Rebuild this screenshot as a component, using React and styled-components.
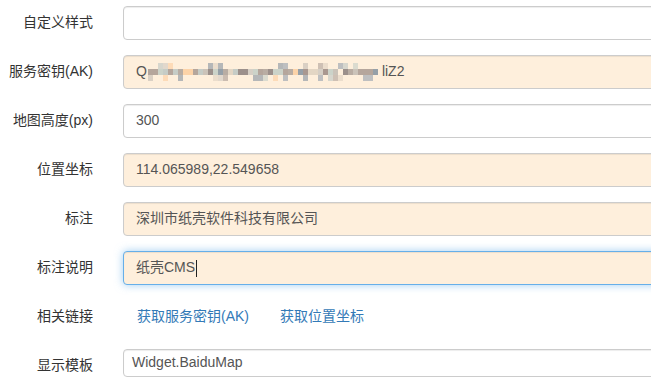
import React from 'react';
import styled, {createGlobalStyle, css} from 'styled-components';

const Global = createGlobalStyle`
  html, body {
    margin: 0;
    background: #fff;
  }
  body {
    font-family: "Liberation Sans", Arial, "Noto Sans CJK SC", sans-serif;
    font-size: 14px;
    line-height: 1.42857;
    color: #333;
    overflow: hidden;
  }
  #root {
    width: 651px;
    height: 387px;
    overflow: hidden;
  }
`;

const Form = styled.form`
  width: 780px;
  padding-top: 6px;
  display: flex;
  flex-direction: column;
  gap: 15px;
`;

const Group = styled.div`
  display: grid;
  grid-template-columns: 108px 1fr;
  align-items: start;
`;

const Label = styled.label`
  padding: 7px 15px 0 0;
  text-align: right;
  color: #333;
  white-space: nowrap;
`;

const Field = styled.div`
  padding: 0 15px;
`;

const autofill = css`
  background: #feefdc;
`;

const focused = css`
  border-color: #66afe9;
  box-shadow: inset 0 1px 1px rgba(0, 0, 0, .075), 0 0 8px rgba(102, 175, 233, .6);
`;

const Input = styled.div`
  box-sizing: border-box;
  height: ${p => p.small ? 28 : 34}px;
  padding: ${p => p.small ? '3px 8px' : '6px 12px'};
  display: flex;
  align-items: center;
  border: 1px solid #ccc;
  border-radius: 4px;
  background: #fff;
  color: #555;
  box-shadow: inset 0 1px 1px rgba(0, 0, 0, .075);
  white-space: nowrap;
  ${p => p.filled && autofill}
  ${p => p.focus && focused}
`;

const Caret = styled.span`
  display: inline-block;
  width: 1px;
  height: 17px;
  background: #222;
  margin-left: 1px;
`;

const Static = styled.div`
  box-sizing: border-box;
  min-height: 34px;
  padding: 7px 0 0 14px;
  display: flex;
  gap: 31px;
`;

const Link = styled.a`
  color: #337ab7;
  text-decoration: none;
`;

const palette = ['#b9ada3', '#a3abb3', '#cbc3b9', '#b5a69c', '#96a0a8', '#d6cfc5', '#a99890', '#c6ccc6', '#e3d6c4', '#fcd3a8', '#9c908b', '#ccd3c9'];

// blurred mosaic over the key, drawn as blocks
const Mosaic = () => {
  let seed = 11;
  const rnd = () => {
    seed = (seed * 9301 + 49297) % 233280;
    return seed / 233280;
  };
  const cols = 46;
  const rects = [];
  for (let c = 0; c < cols; c++) {
    for (let r = 0; r < 3; r++) {
      const chance = r === 1 ? 0.95 : 0.35;
      if (rnd() > chance) continue;
      const color = palette[Math.floor(rnd() * palette.length)];
      rects.push(
        <rect key={c + '-' + r} x={c * 5} y={r * 6} width={5} height={6} fill={color} opacity={r === 1 ? 1 : 0.7}/>
      );
    }
  }
  return (
    <svg width={cols * 5} height={18} style={{margin: '0 4px 0 1px'}}>
      {rects}
    </svg>
  );
};

export default function App() {
  return (
    <>
      <Global/>
      <Form>
        <Group>
          <Label>自定义样式</Label>
          <Field><Input/></Field>
        </Group>
        <Group>
          <Label>服务密钥(AK)</Label>
          <Field><Input filled>Q<Mosaic/>liZ2</Input></Field>
        </Group>
        <Group>
          <Label>地图高度(px)</Label>
          <Field><Input>300</Input></Field>
        </Group>
        <Group>
          <Label>位置坐标</Label>
          <Field><Input filled>114.065989,22.549658</Input></Field>
        </Group>
        <Group>
          <Label>标注</Label>
          <Field><Input filled>深圳市纸壳软件科技有限公司</Input></Field>
        </Group>
        <Group>
          <Label>标注说明</Label>
          <Field><Input filled focus>纸壳CMS<Caret/></Input></Field>
        </Group>
        <Group>
          <Label>相关链接</Label>
          <Field>
            <Static>
              <Link href="#">获取服务密钥(AK)</Link>
              <Link href="#">获取位置坐标</Link>
            </Static>
          </Field>
        </Group>
        <Group>
          <Label>显示模板</Label>
          <Field><Input small>Widget.BaiduMap</Input></Field>
        </Group>
      </Form>
    </>
  );
}
